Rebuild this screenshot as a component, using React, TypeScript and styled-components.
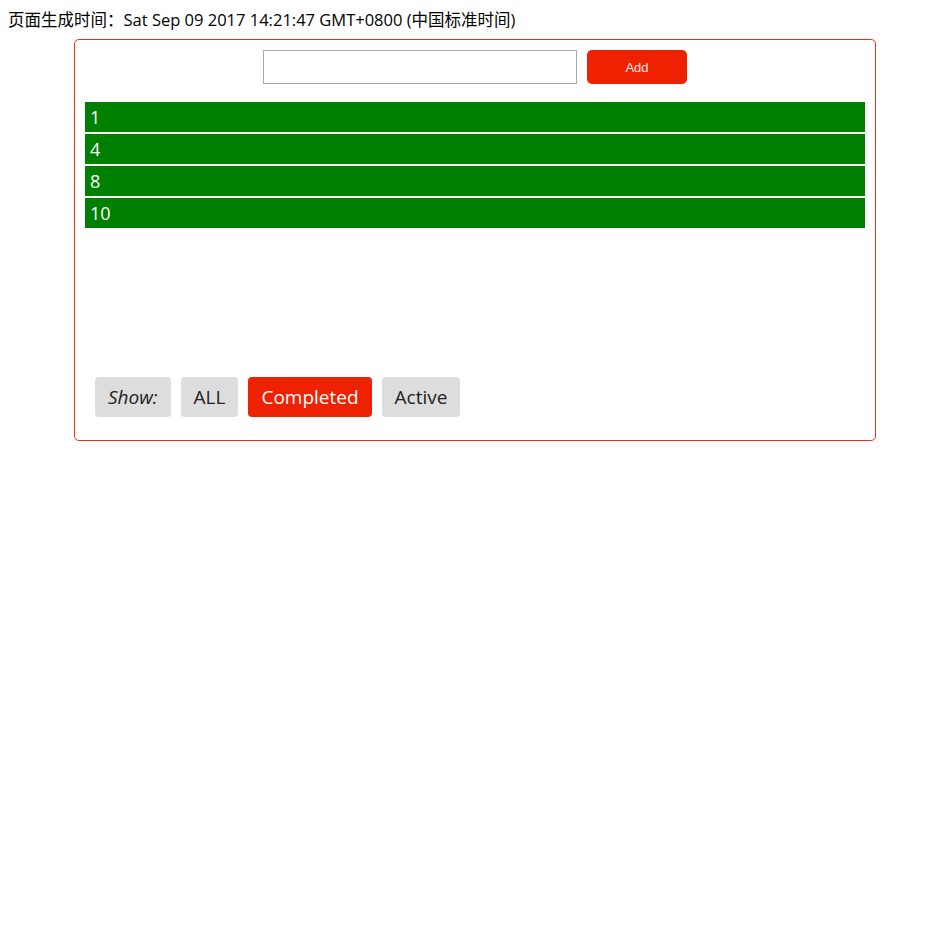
import React from "react";
import styled, { createGlobalStyle } from "styled-components";

const Global = createGlobalStyle`
  body {
    margin: 8px;
    font-family: "Open Sans", "Noto Sans CJK SC", sans-serif;
    font-size: 16px;
    color: #000;
    background: #fff;
  }
`;

const Header = styled.div`
  font-size: 16.5px;
  line-height: 22px;
  margin-top: 1px;
`;

const Box = styled.div`
  box-sizing: border-box;
  width: 802px;
  margin: 8px auto 0;
  border: 1px solid #e8300f;
  border-radius: 5px;
  padding: 10px 10px 23px;
`;

const Form = styled.div`
  display: flex;
  justify-content: center;
  gap: 10px;
`;

const Input = styled.input`
  width: 314px;
  height: 34px;
  box-sizing: border-box;
  border: 1px solid #a9a9a9;
  margin: 0;
  padding: 0 4px;
  font-size: 14px;
  outline: none;
`;

const AddButton = styled.button`
  width: 100px;
  height: 34px;
  border: none;
  border-radius: 5px;
  background: #ee2200;
  color: #f0e6e6;
  font-family: "Liberation Sans", Arial, sans-serif;
  font-size: 13px;
  padding: 0;
`;

const List = styled.ul`
  list-style: none;
  margin: 18px 0 0;
  padding: 0;
  height: 256px;
  display: flex;
  flex-direction: column;
  gap: 2px;
`;

const Item = styled.li`
  height: 30px;
  line-height: 30px;
  background: #008000;
  color: #fff;
  font-size: 18px;
  padding-left: 5px;
`;

const Filters = styled.div`
  display: flex;
  gap: 10px;
  padding-left: 10px;
  margin-top: 19px;
`;

const FilterButton = styled.button<{ $active?: boolean; $italic?: boolean }>`
  height: 40px;
  border: none;
  border-radius: 4px;
  padding: 0 13px;
  font-family: "Open Sans", sans-serif;
  font-size: 19px;
  font-style: ${(p) => (p.$italic ? "italic" : "normal")};
  background: ${(p) => (p.$active ? "#ee2200" : "#dddddd")};
  color: ${(p) => (p.$active ? "#fff" : "#222")};
`;

const items = ["1", "4", "8", "10"];

export default function App() {
  return (
    <>
      <Global />
      <Header>页面生成时间：Sat Sep 09 2017 14:21:47 GMT+0800 (中国标准时间)</Header>
      <Box>
        <Form>
          <Input />
          <AddButton>Add</AddButton>
        </Form>
        <List>
          {items.map((t) => (
            <Item key={t}>{t}</Item>
          ))}
        </List>
        <Filters>
          <FilterButton $italic>Show:</FilterButton>
          <FilterButton>ALL</FilterButton>
          <FilterButton $active>Completed</FilterButton>
          <FilterButton>Active</FilterButton>
        </Filters>
      </Box>
    </>
  );
}
